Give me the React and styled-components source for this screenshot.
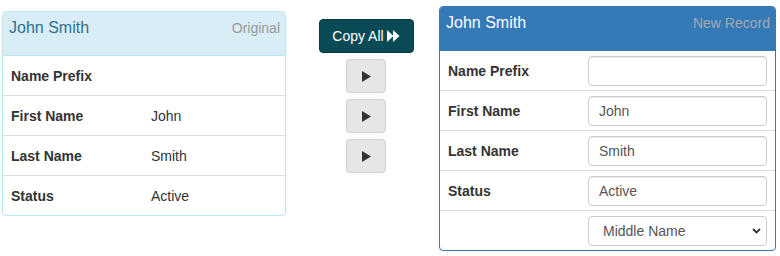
import React from "react";
import styled, { createGlobalStyle } from "styled-components";

const GlobalStyle = createGlobalStyle`
  html, body {
    margin: 0;
    padding: 0;
    background: #fff;
  }
  body {
    font-family: "Liberation Sans", Arial, Helvetica, sans-serif;
    font-size: 14px;
    line-height: 20px;
    color: #333;
  }
  * { box-sizing: border-box; }
`;

const variants = {
  info: { border: "#bce8f1", headBg: "#d9edf7", headLine: "#bce8f1", title: "#31708f", note: "#999" },
  primary: { border: "#337ab7", headBg: "#337ab7", headLine: "#337ab7", title: "#fff", note: "#a3a9b0" },
};

const Page = styled.div`
  display: flex;
  align-items: flex-start;
  width: 780px;
  height: 256px;
  padding-left: 2px;
`;

const Panel = styled.div`
  width: ${(p) => p.$width}px;
  margin-top: ${(p) => p.$top}px;
  border: 1px solid ${(p) => variants[p.$variant].border};
  border-radius: 4px;
  background: #fff;
  overflow: hidden;
  flex-shrink: 0;
`;

const Heading = styled.div`
  display: flex;
  justify-content: space-between;
  align-items: baseline;
  height: 44px;
  padding: 5px 5px 0 6px;
  background: ${(p) => variants[p.$variant].headBg};
  border-bottom: 1px solid ${(p) => variants[p.$variant].headLine};
`;

const Title = styled.span`
  font-size: 16px;
  line-height: 22px;
  color: ${(p) => variants[p.$variant].title};
`;

const Note = styled.span`
  font-size: 14px;
  line-height: 22px;
  color: ${(p) => variants[p.$variant].note};
`;

const Row = styled.div`
  display: grid;
  grid-template-columns: 140px 1fr;
  align-items: center;
  height: 39px;
  & + & {
    height: 40px;
    border-top: 1px solid #ddd;
  }
`;

const Label = styled.div`
  padding: 0 8px;
  font-weight: bold;
  color: #333;
`;

const Value = styled.div`
  padding: 0 8px;
  color: #333;
`;

const Center = styled.div`
  width: 153px;
  flex-shrink: 0;
  margin-top: 19px;
  padding-left: 7px;
  display: flex;
  flex-direction: column;
  align-items: center;
  gap: 6px;
`;

const CopyAllButton = styled.button`
  display: flex;
  align-items: center;
  justify-content: center;
  gap: 3px;
  width: 95px;
  height: 34px;
  padding: 0;
  border: 1px solid #083d46;
  border-radius: 4px;
  background: #094a55;
  color: #fff;
  font-family: inherit;
  font-size: 14px;
  cursor: pointer;
`;

const ArrowButton = styled.button`
  display: flex;
  align-items: center;
  justify-content: center;
  width: 40px;
  height: 34px;
  padding: 0;
  border: 1px solid #cfcfcf;
  border-radius: 4px;
  background: #e6e6e6;
  cursor: pointer;
`;

const Input = styled.input`
  width: 100%;
  height: 30px;
  padding: 0 10px;
  border: 1px solid #ccc;
  border-radius: 4px;
  box-shadow: inset 0 1px 1px rgba(0, 0, 0, 0.075);
  font-family: inherit;
  font-size: 14px;
  color: #555;
  background: #fff;
  outline: none;
`;

const SelectWrap = styled.div`
  position: relative;
  width: 100%;
`;

const Select = styled.select`
  appearance: none;
  -webkit-appearance: none;
  width: 100%;
  height: 30px;
  padding: 0 24px 0 14px;
  border: 1px solid #ccc;
  border-radius: 4px;
  font-family: inherit;
  font-size: 14px;
  color: #555;
  background: #fff;
  outline: none;
`;

const Chevron = styled.svg`
  position: absolute;
  right: 6px;
  top: 12px;
  pointer-events: none;
`;

const ForwardIcon = () => (
  <svg width="13" height="12" viewBox="0 0 13 12">
    <polygon points="0,0 6.5,6 0,12" fill="#fff" />
    <polygon points="6,0 12.5,6 6,12" fill="#fff" />
  </svg>
);

const PlayIcon = () => (
  <svg width="9" height="11" viewBox="0 0 9 11">
    <polygon points="0,0 9,5.5 0,11" fill="#333" />
  </svg>
);

const fields = [
  { label: "Name Prefix", value: "" },
  { label: "First Name", value: "John" },
  { label: "Last Name", value: "Smith" },
  { label: "Status", value: "Active" },
];

export default function App() {
  return (
    <>
      <GlobalStyle />
      <Page>
        <Panel $variant="info" $width={284} $top={11}>
          <Heading $variant="info">
            <Title $variant="info">John Smith</Title>
            <Note $variant="info">Original</Note>
          </Heading>
          {fields.map((f) => (
            <Row key={f.label}>
              <Label>{f.label}</Label>
              <Value>{f.value}</Value>
            </Row>
          ))}
        </Panel>

        <Center>
          <CopyAllButton>
            Copy All <ForwardIcon />
          </CopyAllButton>
          {[1, 2, 3].map((i) => (
            <ArrowButton key={i} aria-label="Copy field">
              <PlayIcon />
            </ArrowButton>
          ))}
        </Center>

        <Panel $variant="primary" $width={337} $top={6}>
          <Heading $variant="primary">
            <Title $variant="primary">John Smith</Title>
            <Note $variant="primary">New Record</Note>
          </Heading>
          {fields.map((f) => (
            <Row key={f.label}>
              <Label>{f.label}</Label>
              <Value>
                <Input value={f.value} readOnly />
              </Value>
            </Row>
          ))}
          <Row>
            <Label />
            <Value>
              <SelectWrap>
                <Select defaultValue="middle">
                  <option value="middle">Middle Name</option>
                </Select>
                <Chevron width="9" height="6" viewBox="0 0 9 6">
                  <polyline points="1,1 4.5,4.5 8,1" fill="none" stroke="#333" strokeWidth="1.8" />
                </Chevron>
              </SelectWrap>
            </Value>
          </Row>
        </Panel>
      </Page>
    </>
  );
}
